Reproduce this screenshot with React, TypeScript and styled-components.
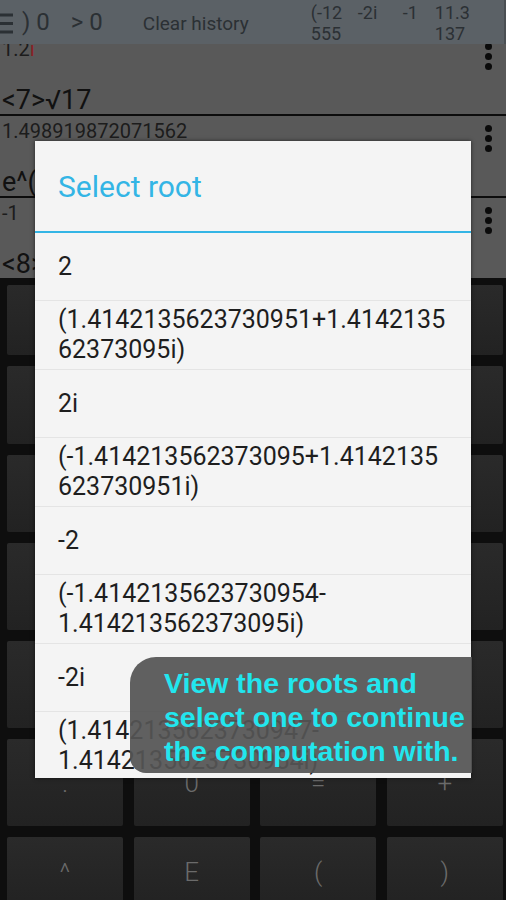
import styled, { createGlobalStyle } from "styled-components";

const GlobalStyle = createGlobalStyle`
  html, body {
    margin: 0;
    padding: 0;
    background: #0e0e0e;
  }
  body {
    font-family: Roboto, "Liberation Sans", sans-serif;
  }
`;

type HistoryEntry = {
  result: string;
  imaginary?: boolean;
  expression: string;
};

const history: HistoryEntry[] = [
  { result: "1.2", imaginary: true, expression: "<7>√17" },
  { result: "1.498919872071562", expression: "e^(1" },
  { result: "-1", expression: "<8>√256" },
];

const roots = [
  "2",
  "(1.4142135623730951+1.414213562373095i)",
  "2i",
  "(-1.414213562373095+1.4142135623730951i)",
  "-2",
  "(-1.4142135623730954-\u200B1.414213562373095i)",
  "-2i",
  "(1.4142135623730947-\u200B1.4142135623730954i)",
];

const keys = [
  ["sin", "cos", "tan", "√"],
  ["7", "8", "9", "÷"],
  ["4", "5", "6", "×"],
  ["1", "2", "3", "−"],
  ["i", "π", "e", "DEL"],
  [".", "0", "=", "+"],
  ["^", "E", "(", ")"],
];

const recent = [
  { top: "(-12", bottom: "555" },
  { top: "-2i", bottom: "" },
  { top: "-1", bottom: "" },
  { top: "11.3", bottom: "137" },
];

const MenuIcon = () => (
  <svg width="18" height="44" viewBox="0 0 18 44">
    <path d="M0 15h14M0 23.5h14M0 32h14" stroke="#2b3034" strokeWidth="3" />
  </svg>
);

const Dots = () => (
  <DotColumn>
    <Dot />
    <Dot />
    <Dot />
  </DotColumn>
);

export default function App() {
  return (
    <>
      <GlobalStyle />
      <Screen>
        <TopBar>
          <MenuSlot>
            <MenuIcon />
          </MenuSlot>
          <BarValue>) 0</BarValue>
          <BarValue gap={21}>&gt; 0</BarValue>
          <ClearButton>Clear history</ClearButton>
          <Recent>
            {recent.map((r, i) => (
              <RecentCell key={i}>
                <span>{r.top}</span>
                <span>{r.bottom || "\u00a0"}</span>
              </RecentCell>
            ))}
          </Recent>
        </TopBar>

        <History>
          {history.map((h, i) => (
            <Entry key={i} first={i === 0}>
              <EntryText>
                <Result>
                  {h.result}
                  {h.imaginary && <Imag>i</Imag>}
                </Result>
                <Expression>{h.expression}</Expression>
              </EntryText>
              <Dots />
            </Entry>
          ))}
        </History>

        <Keypad>
          {keys.map((row, r) =>
            row.map((k, c) => <Key key={`${r}-${c}`}>{k}</Key>)
          )}
        </Keypad>

        <Dialog>
          <DialogTitle>Select root</DialogTitle>
          <RootList>
            {roots.map((r, i) => (
              <RootItem key={i}>{r}</RootItem>
            ))}
          </RootList>
        </Dialog>

        <Coachmark>
          View the roots and
          <br />
          select one to continue
          <br />
          the computation with.
        </Coachmark>
      </Screen>
    </>
  );
}

const Screen = styled.div`
  position: relative;
  width: 506px;
  height: 900px;
  overflow: hidden;
  display: flex;
  flex-direction: column;
  background: #0e0e0e;
`;

const TopBar = styled.div`
  position: relative;
  z-index: 1;
  height: 44px;
  flex: none;
  display: flex;
  align-items: center;
  background: #5b6166;
  color: #2b3034;
  border-right: 2px solid #4a4f53;
  box-sizing: border-box;
`;

const MenuSlot = styled.div`
  display: flex;
  margin-left: -1px;
  width: 23px;
`;

const BarValue = styled.div<{ gap?: number }>`
  font-size: 24px;
  margin-left: ${(p) => p.gap ?? 0}px;
  white-space: pre;
`;

const ClearButton = styled.div`
  font-size: 19px;
  margin-left: 40px;
  margin-top: 2px;
  width: 168px;
  white-space: nowrap;
`;

const Recent = styled.div`
  display: grid;
  grid-template-columns: 47px 45px 32px auto;
`;

const RecentCell = styled.div`
  display: flex;
  flex-direction: column;
  font-size: 18px;
  line-height: 21px;
  margin-top: 2px;
`;

const History = styled.div`
  height: 234px;
  flex: none;
  overflow: hidden;
  background: #595959;
`;

const Entry = styled.div<{ first?: boolean }>`
  display: flex;
  height: 82px;
  box-sizing: border-box;
  margin-top: ${(p) => (p.first ? "-10px" : "0")};
  border-bottom: 2px solid #0c0c0c;
`;

const EntryText = styled.div`
  flex: 1;
  display: flex;
  flex-direction: column;
  padding: 3px 0 0 2px;
`;

const Result = styled.div`
  font-size: 20px;
  line-height: 24px;
  color: #1c1c1c;
`;

const Imag = styled.span`
  color: #8a1f24;
`;

const Expression = styled.div`
  font-size: 27px;
  line-height: 28px;
  margin-top: 25px;
  color: #111;
`;

const DotColumn = styled.div`
  width: 24px;
  margin-right: 6px;
  padding-top: 9px;
  display: flex;
  flex-direction: column;
  align-items: center;
  gap: 3px;
`;

const Dot = styled.span`
  width: 7px;
  height: 7px;
  border-radius: 50%;
  background: #0b0b0b;
`;

const Keypad = styled.div`
  flex: 1;
  display: grid;
  grid-template-columns: repeat(4, 116px);
  grid-template-rows: 70px 78px 77px 87px 87px 87px 70px;
  column-gap: 10.6px;
  row-gap: 11px;
  padding: 7px 3px 0 7px;
  background: #0e0e0e;
`;

const Key = styled.div`
  display: flex;
  align-items: center;
  justify-content: center;
  background: linear-gradient(#2a2a2a, #222222);
  border-radius: 2px;
  color: #6b6b6b;
  font-size: 26px;
  font-weight: 300;
`;

const Dialog = styled.div`
  position: absolute;
  left: 35px;
  top: 141px;
  width: 436px;
  height: 637px;
  overflow: hidden;
  background: #f4f4f4;
  box-shadow: 0 0 4px rgba(0, 0, 0, 0.6);
  display: flex;
  flex-direction: column;
`;

const DialogTitle = styled.div`
  height: 90px;
  flex: none;
  display: flex;
  align-items: center;
  padding-left: 23px;
  font-size: 30px;
  color: #33b5e5;
  border-bottom: 2px solid #33b5e5;
`;

const RootList = styled.div`
  display: flex;
  flex-direction: column;
`;

const RootItem = styled.div`
  min-height: 68px;
  flex: none;
  box-sizing: border-box;
  display: flex;
  align-items: center;
  padding: 4px 21px 4px 23px;
  font-size: 25px;
  line-height: 30px;
  color: #1e1e1e;
  overflow-wrap: anywhere;
  border-bottom: 1px solid #e4e4e4;
`;

const Coachmark = styled.div`
  position: absolute;
  left: 130px;
  top: 657px;
  width: 342px;
  height: 116px;
  box-sizing: border-box;
  padding: 9px 0 0 34px;
  border-radius: 26px 0 0 16px;
  background: rgba(84, 84, 84, 0.93);
  color: #22e6ee;
  font-family: "Liberation Sans", Arial, sans-serif;
  font-weight: 700;
  font-size: 28.5px;
  line-height: 34px;
  white-space: nowrap;
  overflow: hidden;
`;
